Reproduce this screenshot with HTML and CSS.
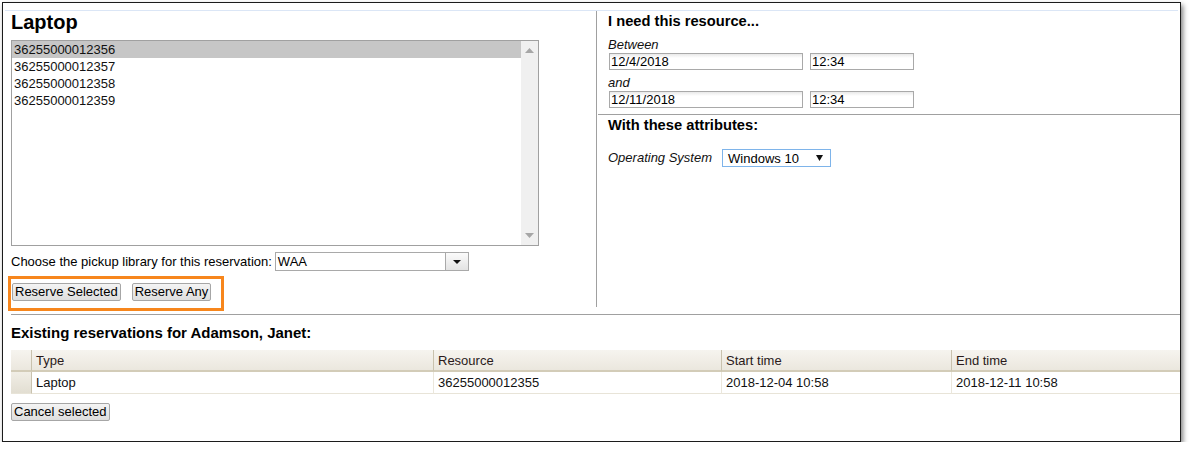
FILE: index.html
```html
<!DOCTYPE html>
<html lang="en">
<head>
    <meta charset="UTF-8">
    <title>Reserve Laptop</title>
    <link rel="stylesheet" href="styles.css">
</head>
<body>
    <div class="window">
        <div class="topline"></div>
        <div class="top">
            <div class="pick">
                <h2>Laptop</h2>
                <div class="listbox">
                    <div class="items">
                        <div class="item selected">36255000012356</div>
                        <div class="item">36255000012357</div>
                        <div class="item">36255000012358</div>
                        <div class="item">36255000012359</div>
                    </div>
                    <div class="scrollbar">
                        <svg width="9" height="5" viewBox="0 0 9 5"><path d="M0 5 L4.5 0 L9 5 Z" fill="#a6a6a6"/></svg>
                        <svg width="9" height="5" viewBox="0 0 9 5"><path d="M0 0 L9 0 L4.5 5 Z" fill="#a6a6a6"/></svg>
                    </div>
                </div>
                <div class="pickup">
                    <label>Choose the pickup library for this reservation:</label>
                    <div class="dropdown">
                        <span class="value">WAA</span>
                        <span class="arrow">
                            <svg width="8" height="4" viewBox="0 0 8 4"><path d="M0 0 L8 0 L4 4 Z" fill="#111"/></svg>
                        </span>
                    </div>
                </div>
                <div class="actions">
                    <button>Reserve Selected</button>
                    <button>Reserve Any</button>
                    <span class="highlight"></span>
                </div>
            </div>

            <div class="when">
                <h3 class="first">I need this resource...</h3>
                <div class="caption">Between</div>
                <div class="range">
                    <input class="date" type="text" value="12/4/2018">
                    <input class="time" type="text" value="12:34">
                </div>
                <div class="caption">and</div>
                <div class="range">
                    <input class="date" type="text" value="12/11/2018">
                    <input class="time" type="text" value="12:34">
                </div>
                <hr>
                <h3>With these attributes:</h3>
                <div class="attr">
                    <span class="caption">Operating System</span>
                    <div class="os">
                        <span>Windows 10</span>
                        <svg width="7" height="6" viewBox="0 0 7 6"><path d="M0 0 L7 0 L3.5 6 Z" fill="#111"/></svg>
                    </div>
                </div>
            </div>
        </div>

        <div class="existing">
            <h3>Existing reservations for Adamson, Janet:</h3>
            <table>
                <thead>
                    <tr>
                        <th class="sel"></th>
                        <th class="c-type">Type</th>
                        <th class="c-res">Resource</th>
                        <th class="c-start">Start time</th>
                        <th>End time</th>
                    </tr>
                </thead>
                <tbody>
                    <tr>
                        <td class="sel"></td>
                        <td>Laptop</td>
                        <td>36255000012355</td>
                        <td>2018-12-04 10:58</td>
                        <td>2018-12-11 10:58</td>
                    </tr>
                </tbody>
            </table>
            <button class="cancel">Cancel selected</button>
        </div>
    </div>
</body>
</html>
```

FILE: styles.css
```css
body {
    margin: 0;
    font-family: "Liberation Sans", Arial, sans-serif;
    font-size: 13px;
    color: #000;
    background: #fff;
}

.window {
    box-sizing: border-box;
    width: 1179px;
    height: 440px;
    margin: 2px 0 0 2px;
    padding-top: 7px;
    border: 1px solid #1c1c1c;
    background: #fff;
    box-shadow: 2px 3px 5px rgba(0,0,0,0.5);
}

.topline {
    margin: 0 2px;
    border-top: 1px solid #dbe6f6;
}

.top {
    display: flex;
    height: 296px;
}

/* left column: items of this type */
.pick {
    box-sizing: border-box;
    width: 594px;
    padding-left: 8px;
    border-right: 1px solid #a0a0a0;
}

.pick h2 {
    margin: 1px 0 0;
    font-size: 20px;
    line-height: 20px;
    font-weight: bold;
}

.listbox {
    display: flex;
    box-sizing: border-box;
    width: 528px;
    height: 206px;
    margin-top: 8px;
    border: 1px solid #a0a0a0;
}

.items {
    flex: 1;
}

.item {
    height: 17px;
    line-height: 17px;
    padding-left: 2px;
    color: #111;
}

.item.selected {
    background: #c6c6c6;
}

.scrollbar {
    width: 17px;
    padding: 7px 0 7px;
    background: #f0f0f0;
    display: flex;
    flex-direction: column;
    justify-content: space-between;
    align-items: center;
}

.pickup {
    display: flex;
    align-items: center;
    height: 19px;
    margin-top: 6px;
}

.pickup label {
    margin-right: 3px;
}

.dropdown {
    display: flex;
    box-sizing: border-box;
    width: 194px;
    height: 19px;
    border: 1px solid #a9a9a9;
}

.dropdown .value {
    flex: 1;
    padding-left: 2px;
    line-height: 17px;
}

.dropdown .arrow {
    width: 22px;
    border-left: 1px solid #a9a9a9;
    background: linear-gradient(#fbfbfb, #e3e3e3);
    display: flex;
    align-items: center;
    justify-content: center;
}

button {
    box-sizing: border-box;
    height: 18px;
    padding: 0 2px;
    font-family: "Liberation Sans", Arial, sans-serif;
    font-size: 13px;
    line-height: 16px;
    color: #000;
    background: linear-gradient(#f4f4f4, #dedede);
    border: 1px solid #a6a6a6;
    border-radius: 2px;
}

.actions {
    position: relative;
    display: flex;
    gap: 11px;
    margin-top: 12px;
    padding-left: 1px;
}

/* orange callout round the two reserve buttons */
.highlight {
    position: absolute;
    left: -3px;
    top: -7px;
    box-sizing: border-box;
    width: 216px;
    height: 35px;
    border: 3px solid #f7861c;
}

/* right column: time range and attributes */
.when {
    flex: 1;
    padding-left: 11px;
}

.when h3 {
    margin: 2px 0 0;
    font-size: 14.7px;
    line-height: 17px;
    font-weight: bold;
}

.when h3.first {
    margin-top: 2px;
    margin-bottom: 7px;
}

.caption {
    font-style: italic;
    line-height: 16px;
    color: #111;
}

.range {
    display: flex;
    gap: 6px;
    margin-bottom: 5px;
}

.range input {
    box-sizing: border-box;
    height: 17px;
    margin: 0 0 0 1px;
    padding: 0 1px;
    font-family: "Liberation Sans", Arial, sans-serif;
    font-size: 13px;
    color: #000;
    border: 1px solid #a9a9a9;
    background: linear-gradient(#e9e9e9, #fff 4px);
}

.range .date {
    width: 194px;
}

.range .time {
    width: 104px;
}

.when hr {
    margin: 6px 0 0 -10px;
    border: 0;
    border-top: 1px solid #a0a0a0;
}

.attr {
    display: flex;
    align-items: center;
    margin-top: 15px;
}

.attr .caption {
    margin-right: 10px;
}

.os {
    display: flex;
    align-items: center;
    justify-content: space-between;
    box-sizing: border-box;
    width: 109px;
    height: 18px;
    padding: 0 7px 0 5px;
    border: 1px solid #7eb4ea;
}

/* existing reservations */
.existing {
    margin: 7px 0 0 8px;
    border-top: 1px solid #a0a0a0;
}

.existing h3 {
    margin: 9px 0 8px;
    font-size: 15px;
    line-height: 18px;
    font-weight: bold;
}

table {
    width: 100%;
    border-collapse: separate;
    border-spacing: 0;
}

th {
    height: 18px;
    padding: 2px 0 0 4px;
    line-height: 18px;
    text-align: left;
    font-weight: normal;
    color: #2a1a1a;
    background: linear-gradient(#f6f4ef, #ebe7de);
    border-right: 1px solid #c9c2ae;
    border-bottom: 2px solid #d3ccb8;
}

th:last-child {
    border-right: 0;
}

td {
    height: 20px;
    padding: 1px 0 0 4px;
    line-height: 20px;
    color: #111;
    border-right: 1px solid #ebe7dc;
    border-bottom: 1px solid #e8e4d8;
}

td:last-child {
    border-right: 0;
}

th.sel,
td.sel {
    width: 20px;
    padding: 0;
    border-right: 1px solid #c9c2ae;
}

td.sel {
    background: linear-gradient(#f1eee6, #e2ded2);
}

.c-type {
    width: 397px;
}

.c-res {
    width: 283px;
}

.c-start {
    width: 225px;
}

.cancel {
    margin-top: 9px;
}
```
